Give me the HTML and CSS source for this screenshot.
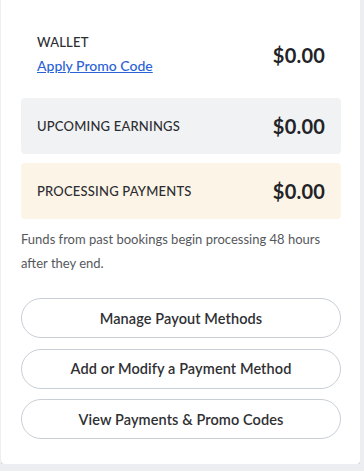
FILE: index.html
```html
<!DOCTYPE html>
<html lang="en">
<head>
<meta charset="utf-8">
<title>Wallet</title>
<link rel="stylesheet" href="styles.css">
</head>
<body>
<div class="card">
  <div class="wallet">
    <div class="wallet-info">
      <div class="label">WALLET</div>
      <a class="promo" href="#">Apply Promo Code</a>
    </div>
    <div class="amount">$0.00</div>
  </div>
  <div class="box box-gray">
    <div class="label">UPCOMING EARNINGS</div>
    <div class="amount">$0.00</div>
  </div>
  <div class="box box-orange">
    <div class="label">PROCESSING PAYMENTS</div>
    <div class="amount">$0.00</div>
  </div>
  <p class="note">Funds from past bookings begin processing 48 hours after they end.</p>
  <div class="actions">
    <button class="btn">Manage Payout Methods</button>
    <button class="btn">Add or Modify a Payment Method</button>
    <button class="btn">View Payments &amp; Promo Codes</button>
  </div>
</div>
</body>
</html>
```

FILE: styles.css
```css
* { box-sizing: border-box; }
html, body {
  margin: 0;
  padding: 0;
  background: #eceef1;
  font-family: "Lato", "Liberation Sans", sans-serif;
  color: #2f3033;
}
.card {
  margin-left: 1px;
  width: 359px;
  background: #ffffff;
  border-radius: 0 0 4px 4px;
  box-shadow: 0 2px 0 #d4d8dd;
  padding: 33px 19px 25px 20px;
}
.wallet {
  display: flex;
  align-items: center;
  justify-content: space-between;
  padding: 0 16px;
  margin-bottom: 22px;
}
.wallet-info {
  display: flex;
  flex-direction: column;
}
.label {
  font-size: 13px;
  line-height: 18px;
  font-weight: 500;
  letter-spacing: 0.2px;
  color: #2c2d30;
}
.promo {
  margin-top: 5px;
  font-size: 14px;
  line-height: 20px;
  font-weight: 500;
  color: #2a62d6;
  text-decoration: underline;
}
.amount {
  font-size: 20px;
  font-weight: 700;
  color: #222326;
  letter-spacing: 0.2px;
}
.box {
  display: flex;
  align-items: center;
  justify-content: space-between;
  height: 56px;
  padding: 0 16px;
  border-radius: 4px;
}
.box-gray { background: #f1f2f4; }
.box-orange { background: #fdf4e8; margin-top: 9px; }
.note {
  margin: 8px 0 0;
  font-size: 13px;
  line-height: 24px;
  color: #56585c;
}
.actions {
  margin-top: 23px;
  display: flex;
  flex-direction: column;
  gap: 10.5px;
}
.btn {
  height: 40px;
  width: 100%;
  border: 1px solid #c9cfd7;
  border-radius: 20px;
  background: #ffffff;
  font-family: "Lato", "Liberation Sans", sans-serif;
  font-size: 14.5px;
  font-weight: 600;
  color: #2f3033;
  letter-spacing: 0.1px;
}
```
